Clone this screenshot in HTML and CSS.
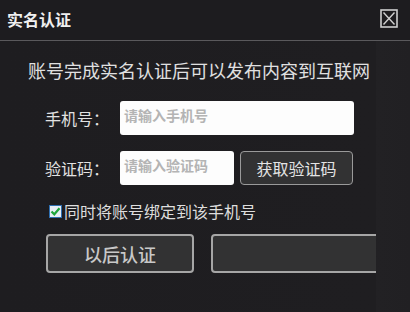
FILE: index.html
```html
<!DOCTYPE html>
<html lang="zh-CN">
<head>
<meta charset="utf-8">
<title>实名认证</title>
<link rel="stylesheet" href="styles.css">
</head>
<body>
<div class="dialog">
  <div class="titlebar">
    <span class="title">实名认证</span>
    <svg class="close" width="18" height="19" viewBox="0 0 18 19">
      <rect x="1" y="1" width="16" height="17" fill="none" stroke="#cfcfcf" stroke-width="1.6"/>
      <path d="M3.5 3.5 L14.5 15.5 M14.5 3.5 L3.5 15.5" stroke="#cfcfcf" stroke-width="1.4" fill="none"/>
    </svg>
  </div>
  <div class="content">
    <div class="heading">账号完成实名认证后可以发布内容到互联网</div>
    <div class="row row-phone">
      <span class="label">手机号：</span>
      <div class="input input-wide">请输入手机号</div>
    </div>
    <div class="row row-code">
      <span class="label">验证码：</span>
      <div class="input input-short">请输入验证码</div>
      <div class="btn btn-code">获取验证码</div>
    </div>
    <div class="check-row">
      <span class="checkbox">
        <svg width="11" height="11" viewBox="0 0 11 11"><path d="M1.5 5.5 L4.3 8.3 L9.5 2.3" stroke="#1fa53a" stroke-width="2.2" fill="none"/></svg>
      </span>
      <span class="check-label">同时将账号绑定到该手机号</span>
    </div>
    <div class="actions">
      <div class="btn btn-later">以后认证</div>
      <div class="btn btn-confirm"></div>
    </div>
  </div>
</div>
</body>
</html>
```
FILE: styles.css
```css
html, body {
  margin: 0;
  padding: 0;
}
body {
  width: 410px;
  height: 312px;
  overflow: hidden;
  background: #1f1e21;
  font-family: "Noto Sans CJK SC", "Noto Sans", sans-serif;
  color: #dedede;
}
.dialog {
  width: 410px;
  height: 312px;
  background: linear-gradient(90deg, #1e1d20 0, #1f1e21 376px, #222124 376px, #212023 410px);
}
.titlebar {
  height: 40px;
  border-bottom: 1px solid #5a595c;
  background: #1d1c1f;
  display: flex;
  align-items: center;
  justify-content: space-between;
  padding: 0 12px 0 7px;
}
.title {
  font-size: 16px;
  font-weight: bold;
  color: #f0f0f0;
  line-height: 20px;
  margin-top: -3px;
}
.close {
  margin-top: -3px;
  display: block;
}
.content {
  width: 376px;
  overflow: hidden;
  display: flex;
  flex-direction: column;
}
.heading {
  margin-top: 18px;
  padding-left: 28px;
  font-size: 18px;
  line-height: 22px;
  color: #e0e0e0;
  white-space: nowrap;
}
.row {
  display: flex;
  align-items: center;
  height: 34px;
}
.row-phone {
  margin-top: 20px;
}
.row-code {
  margin-top: 16px;
}
.label {
  width: 75px;
  padding-left: 45px;
  font-size: 16px;
  line-height: 20px;
  color: #e2e2e2;
  box-sizing: content-box;
  flex: none;
}
.input {
  height: 34px;
  background: #fdfdfd;
  border-radius: 3px;
  box-sizing: border-box;
  padding-left: 4px;
  font-size: 14px;
  font-weight: bold;
  color: #b4b4b4;
  line-height: 28px;
  flex: none;
  white-space: nowrap;
  overflow: hidden;
}
.input-wide {
  width: 234px;
}
.input-short {
  width: 114px;
}
.btn {
  box-sizing: border-box;
  border: 1.5px solid #9a9a9a;
  border-radius: 4px;
  background: #323233;
  display: flex;
  align-items: center;
  justify-content: center;
  flex: none;
}
.btn-code {
  margin-left: 6px;
  width: 113px;
  height: 34px;
  font-size: 16px;
  color: #e4e4e4;
}
.check-row {
  display: flex;
  align-items: center;
  margin-top: 17px;
  padding-left: 49px;
  height: 18px;
}
.checkbox {
  width: 13px;
  height: 13px;
  box-sizing: border-box;
  border: 1px solid #2f6fb0;
  background: #e8eef5;
  display: flex;
  align-items: center;
  justify-content: center;
  flex: none;
}
.checkbox svg {
  display: block;
}
.check-label {
  margin-left: 2px;
  font-size: 16px;
  line-height: 18px;
  color: #dedede;
  white-space: nowrap;
}
.actions {
  display: flex;
  margin-top: 14px;
  padding-left: 46px;
  gap: 17px;
}
.btn-later {
  width: 148px;
  height: 39px;
  border-width: 2px;
  border-color: #a6a6a6;
  font-size: 18px;
  font-weight: 500;
  color: #c8c8c8;
}
.btn-confirm {
  width: 180px;
  height: 39px;
  border-width: 2px;
  border-color: #a6a6a6;
}
```
